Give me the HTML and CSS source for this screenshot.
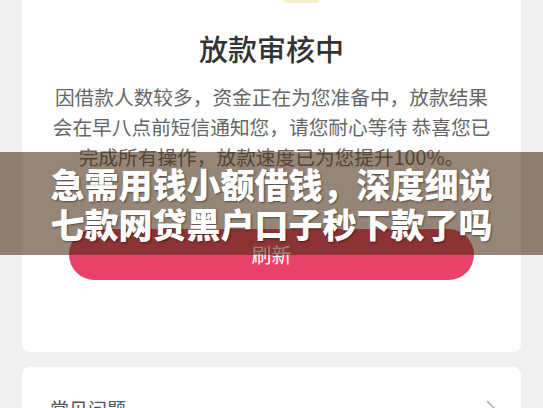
FILE: index.html
```html
<!DOCTYPE html>
<html lang="zh-CN">
<head>
  <meta charset="UTF-8">
  <meta name="viewport" content="width=device-width, initial-scale=1">
  <title>放款审核中</title>
  <link rel="stylesheet" href="styles.css">
</head>
<body>
  <div class="page">
    <div class="card">
      <div class="card-top"><span class="badge"></span></div>
      <h1>放款审核中</h1>
      <p class="desc">因借款人数较多，资金正在为您准备中，放款结果<br>会在早八点前短信通知您，请您耐心等待 恭喜您已<br>完成所有操作，放款速度已为您提升100%。</p>
      <button class="refresh">刷新</button>
    </div>

    <div class="card faq">
      <span>常见问题</span>
      <svg class="arrow" width="12" height="20" viewBox="0 0 12 20"><path d="M2 2 L10 10 L2 18" fill="none" stroke="#bdbdbd" stroke-width="2"/></svg>
    </div>
  </div>

  <div class="banner">
    <div>急需用钱小额借钱，深度细说</div>
    <div>七款网贷黑户口子秒下款了吗</div>
  </div>
</body>
</html>
```

FILE: styles.css
```css
:root {
  --page-bg: #f0f0f0;
  --card-bg: #ffffff;
  --accent: #ea4169;
  --title: #333333;
  --text: #666666;
}

body {
  margin: 0;
  height: 408px;
  overflow: hidden;
  font-family: "Noto Sans CJK SC", "Noto Sans", sans-serif;
  background-color: var(--page-bg);
}

.page {
  padding: 0 22px;
}

.card {
  background-color: var(--card-bg);
  border-radius: 0 0 8px 8px;
  padding: 0 0 72px;
  text-align: center;
}

.card-top {
  height: 4px;
  display: flex;
  justify-content: center;
}

.badge {
  width: 36px;
  height: 3px;
  margin-left: 58px;
  background-color: #f4efcf;
  border-radius: 0 0 18px 18px;
}

h1 {
  margin: 24px 0 13px;
  font-size: 29px;
  line-height: 41px;
  font-weight: 500;
  color: var(--title);
}

.desc {
  margin: 0;
  font-size: 19.7px;
  line-height: 30px;
  color: var(--text);
}

.refresh {
  display: block;
  width: 405px;
  height: 51px;
  margin: 57px auto 0;
  border: none;
  border-radius: 26px;
  background-color: var(--accent);
  color: white;
  font-family: inherit;
  font-size: 20px;
}

.faq {
  margin-top: 15px;
  border-radius: 8px;
  padding: 28px 24px 20px 28px;
  display: flex;
  justify-content: space-between;
  align-items: center;
  font-size: 19px;
  color: #555;
}

.banner {
  position: absolute;
  top: 152px;
  left: 0;
  right: 0;
  height: 103px;
  display: flex;
  flex-direction: column;
  justify-content: center;
  align-items: center;
  background-color: rgba(68, 40, 12, 0.56);
  color: white;
  font-size: 34px;
  line-height: 40px;
  font-weight: 900;
  text-shadow: 1px 1px 2px rgba(0, 0, 0, 0.45);
}
```
